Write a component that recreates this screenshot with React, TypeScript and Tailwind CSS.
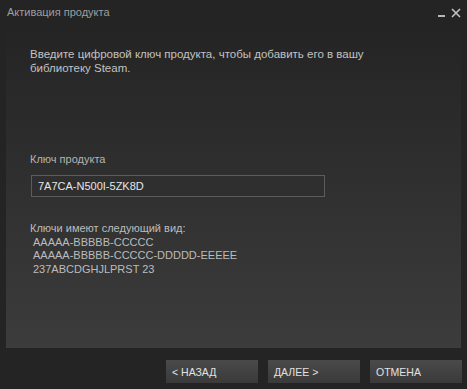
export default function App() {
  return (
    <div
      className="w-[467px] h-[389px] bg-[#242424] flex flex-col text-[12px] leading-[14px]"
      style={{ fontFamily: '"Liberation Sans", Arial, sans-serif' }}
    >
      <div className="h-[24px] flex items-center justify-between pl-[7px] pr-[6px] text-[#9e9e9e]">
        <span className="text-[11px]">Активация продукта</span>
        <div className="flex items-center gap-[6px] text-[#c4c4c4]">
          <span className="block w-[7px] h-[2px] bg-[#b8b8b8] mt-[8px]" />
          <svg width="10" height="10" viewBox="0 0 10 10" className="mt-[1px]">
            <path d="M1 1 L9 9 M9 1 L1 9" stroke="#c4c4c4" strokeWidth="1.6" />
          </svg>
        </div>
      </div>
      <div className="mx-[6px] h-[324px] bg-gradient-to-b from-[#242424] to-[#3c3c3c] pl-[24px] pt-[23px] text-[#c2c2c2]">
        <p className="w-[400px] text-[11.5px]">
          Введите цифровой ключ продукта, чтобы добавить его в вашу
          <br />
          библиотеку Steam.
        </p>
        <p className="mt-[77px] text-[11px] text-[#b4b4b4]">Ключ продукта</p>
        <div className="mt-[9px] ml-[1px] w-[294px] h-[22px] border border-[#5c5c5c] bg-[#2f2f2f] flex items-center pl-[6px] text-[11px] text-[#e6e6e6]">
          7A7CA-N500I-5ZK8D
        </div>
        <div className="mt-[25px] text-[11px] text-[#bcbcbc] leading-[13.7px]">
          <p>Ключи имеют следующий вид:</p>
          <p className="pl-[3px]">AAAAA-BBBBB-CCCCC</p>
          <p className="pl-[3px]">AAAAA-BBBBB-CCCCC-DDDDD-EEEEE</p>
          <p className="pl-[3px]">237ABCDGHJLPRST 23</p>
        </div>
      </div>
      <div className="flex justify-end gap-[10px] pr-[5px] mt-[12px]">
        {["< НАЗАД", "ДАЛЕЕ >", "ОТМЕНА"].map((t) => (
          <button
            key={t}
            className="w-[92px] h-[23px] bg-gradient-to-b from-[#4a4a4a] to-[#3a3a3a] text-left pl-[6px] text-[10.5px] text-[#e2e2e2]"
            style={{ fontFamily: '"Liberation Sans", Arial, sans-serif' }}
          >
            {t}
          </button>
        ))}
      </div>
    </div>
  );
}
